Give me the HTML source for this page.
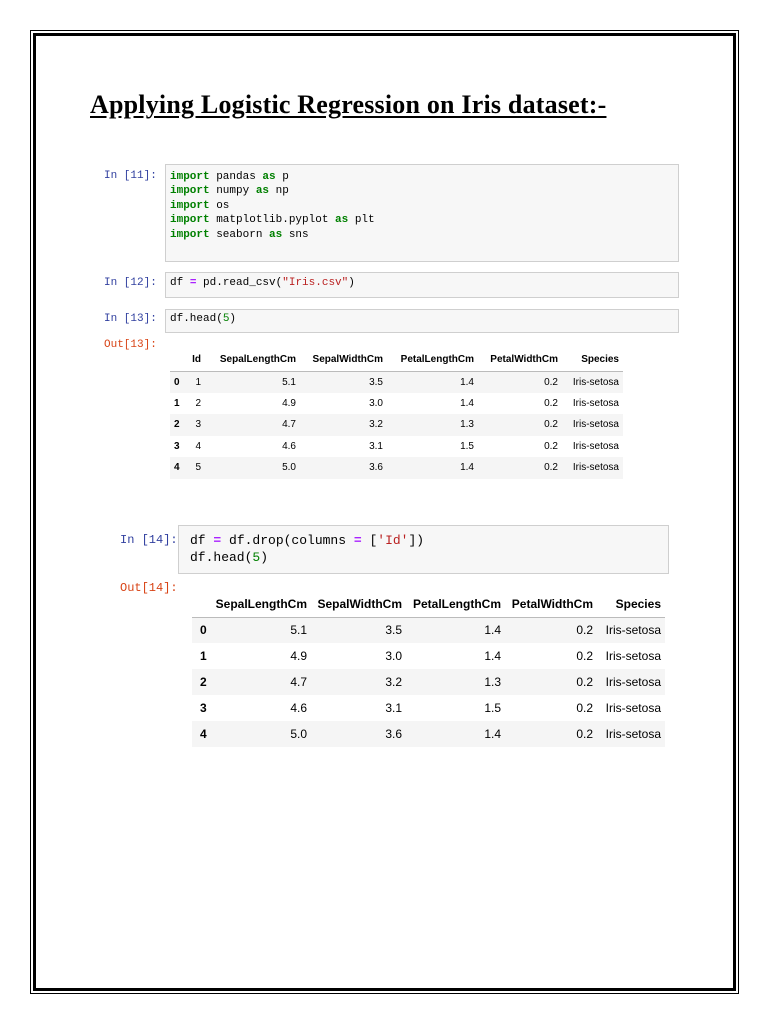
<!DOCTYPE html>
<html><head><meta charset="utf-8"><style>
*{margin:0;padding:0;box-sizing:border-box}
body{width:768px;height:1024px;background:#fff;position:relative;overflow:hidden;font-family:"Liberation Sans",sans-serif}
.a{position:absolute}
.mono{font-family:"Liberation Mono",monospace;white-space:pre}
.cell{position:absolute;background:#f7f7f7;border:1px solid #cfcfcf}
.p{position:absolute;font-family:"Liberation Mono",monospace;color:#303f9f;white-space:pre}
.o{position:absolute;font-family:"Liberation Mono",monospace;color:#d84315;white-space:pre}
.k{color:#008000;font-weight:bold}
.s{color:#ba2121}
.n{color:#008000}
.op{color:#aa22ff;font-weight:bold}
table{position:absolute;border-collapse:collapse;table-layout:fixed;color:#000}
td,th{text-align:right;padding-right:4px;white-space:nowrap}
th{font-weight:bold}
td.i{font-weight:bold;text-align:left;padding-left:4px}
tr.h th{border-bottom:1px solid #bbb}
tr.g td{background:#f5f5f5}
</style></head><body>
<div class="a" style="left:30px;top:30px;width:709px;height:964px;border:1px solid #000"></div>
<div class="a" style="left:33px;top:33px;width:703px;height:958px;border:3px solid #000"></div>
<div class="a" style="left:90px;top:90px;font-family:'Liberation Serif',serif;font-weight:bold;font-size:26px;letter-spacing:0.2px;text-decoration:underline;text-underline-offset:3px;white-space:nowrap">Applying Logistic Regression on Iris dataset:-</div>

<div class="p" style="left:104px;top:170px;font-size:11px">In [11]:</div>
<div class="cell" style="left:165px;top:164px;width:514px;height:98px"></div>
<div class="a mono" style="left:170px;top:170px;font-size:11px;line-height:14.4px"><span class="k">import</span> pandas <span class="k">as</span> p
<span class="k">import</span> numpy <span class="k">as</span> np
<span class="k">import</span> os
<span class="k">import</span> matplotlib.pyplot <span class="k">as</span> plt
<span class="k">import</span> seaborn <span class="k">as</span> sns</div>

<div class="p" style="left:104px;top:277px;font-size:11px">In [12]:</div>
<div class="cell" style="left:165px;top:272px;width:514px;height:26px"></div>
<div class="a mono" style="left:170px;top:277px;font-size:11px">df <span class="op">=</span> pd.read_csv(<span class="s">"Iris.csv"</span>)</div>

<div class="p" style="left:104px;top:313px;font-size:11px">In [13]:</div>
<div class="cell" style="left:165px;top:309px;width:514px;height:24px"></div>
<div class="a mono" style="left:170px;top:313px;font-size:11px">df.head(<span class="n">5</span>)</div>
<div class="o" style="left:104px;top:339px;font-size:11px">Out[13]:</div>

<table style="left:170px;top:349px;width:453px;font-size:10px">
<colgroup><col style="width:18px"><col style="width:17px"><col style="width:95px"><col style="width:87px"><col style="width:91px"><col style="width:84px"><col style="width:61px"></colgroup>
<tr class="h" style="height:22px"><th></th><th>Id</th><th>SepalLengthCm</th><th>SepalWidthCm</th><th>PetalLengthCm</th><th>PetalWidthCm</th><th>Species</th></tr>
<tr class="g" style="height:21.5px"><td class="i">0</td><td>1</td><td>5.1</td><td>3.5</td><td>1.4</td><td>0.2</td><td>Iris-setosa</td></tr>
<tr style="height:21.5px"><td class="i">1</td><td>2</td><td>4.9</td><td>3.0</td><td>1.4</td><td>0.2</td><td>Iris-setosa</td></tr>
<tr class="g" style="height:21.5px"><td class="i">2</td><td>3</td><td>4.7</td><td>3.2</td><td>1.3</td><td>0.2</td><td>Iris-setosa</td></tr>
<tr style="height:21.5px"><td class="i">3</td><td>4</td><td>4.6</td><td>3.1</td><td>1.5</td><td>0.2</td><td>Iris-setosa</td></tr>
<tr class="g" style="height:21.5px"><td class="i">4</td><td>5</td><td>5.0</td><td>3.6</td><td>1.4</td><td>0.2</td><td>Iris-setosa</td></tr>
</table>

<div class="p" style="left:120px;top:533px;font-size:12px">In [14]:</div>
<div class="cell" style="left:178px;top:525px;width:491px;height:49px"></div>
<div class="a mono" style="left:190px;top:532px;font-size:13px;line-height:17px">df <span class="op">=</span> df.drop(columns <span class="op">=</span> [<span class="s">'Id'</span>])
df.head(<span class="n">5</span>)</div>
<div class="o" style="left:120px;top:581px;font-size:12px">Out[14]:</div>

<table style="left:192px;top:592px;width:473px;font-size:12px">
<colgroup><col style="width:20px"><col style="width:99px"><col style="width:95px"><col style="width:99px"><col style="width:92px"><col style="width:68px"></colgroup>
<tr class="h" style="height:25px"><th></th><th>SepalLengthCm</th><th>SepalWidthCm</th><th>PetalLengthCm</th><th>PetalWidthCm</th><th>Species</th></tr>
<tr class="g" style="height:26px"><td class="i" style="padding-left:8px">0</td><td>5.1</td><td>3.5</td><td>1.4</td><td>0.2</td><td>Iris-setosa</td></tr>
<tr style="height:26px"><td class="i" style="padding-left:8px">1</td><td>4.9</td><td>3.0</td><td>1.4</td><td>0.2</td><td>Iris-setosa</td></tr>
<tr class="g" style="height:26px"><td class="i" style="padding-left:8px">2</td><td>4.7</td><td>3.2</td><td>1.3</td><td>0.2</td><td>Iris-setosa</td></tr>
<tr style="height:26px"><td class="i" style="padding-left:8px">3</td><td>4.6</td><td>3.1</td><td>1.5</td><td>0.2</td><td>Iris-setosa</td></tr>
<tr class="g" style="height:26px"><td class="i" style="padding-left:8px">4</td><td>5.0</td><td>3.6</td><td>1.4</td><td>0.2</td><td>Iris-setosa</td></tr>
</table>
</body></html>
